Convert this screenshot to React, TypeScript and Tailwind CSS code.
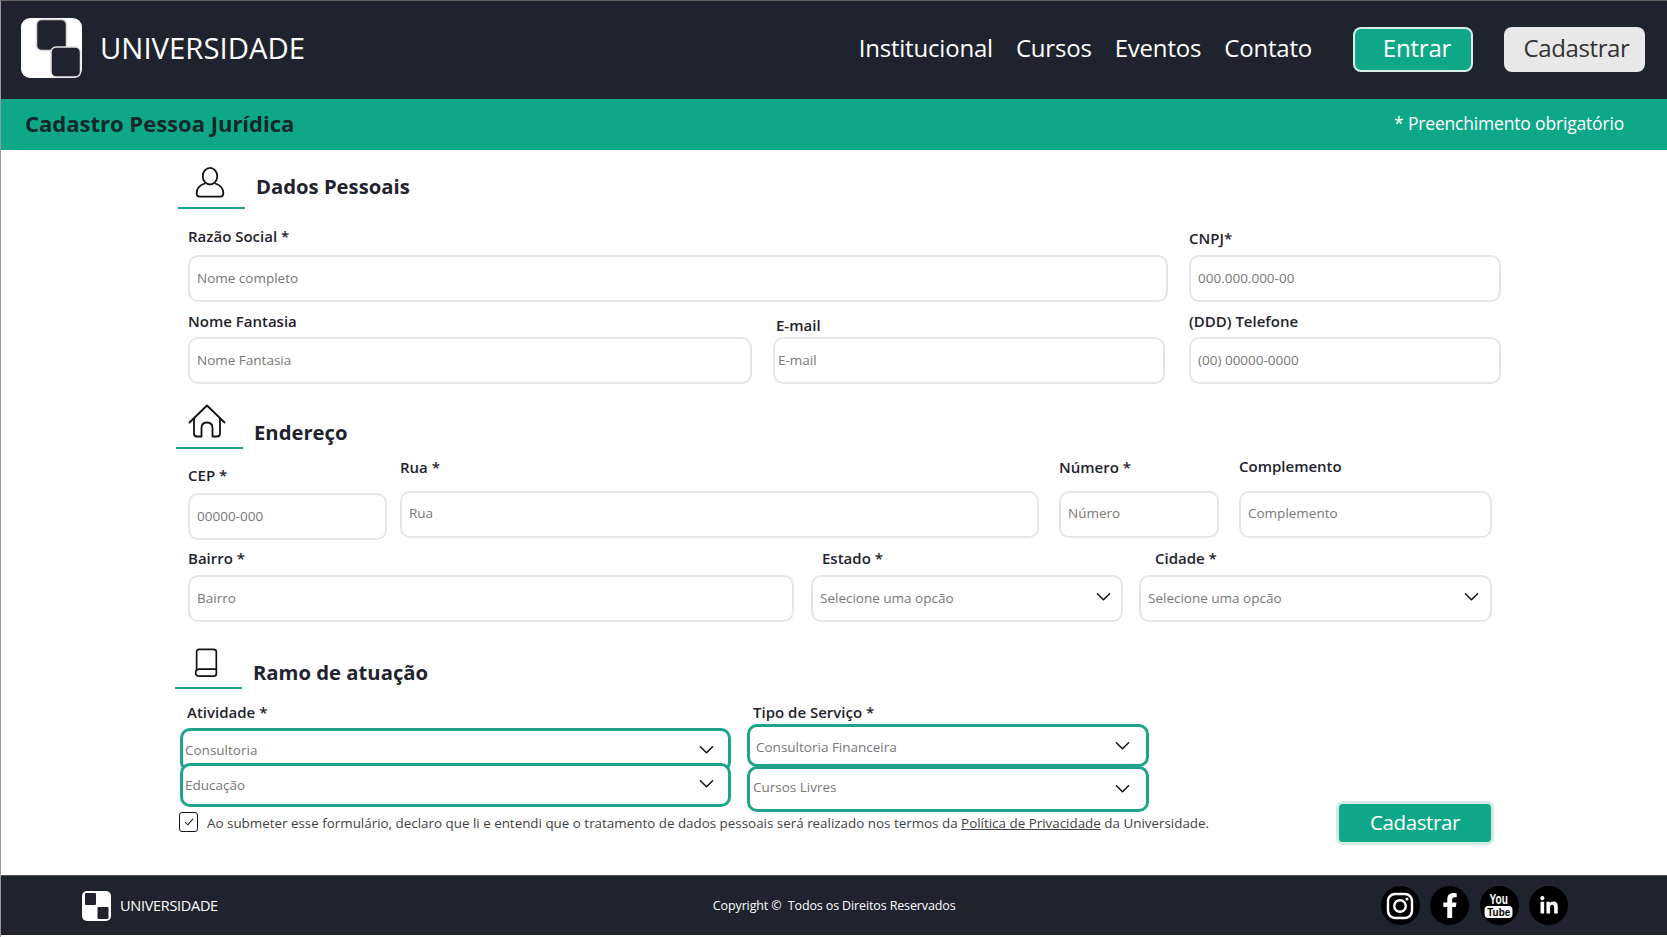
import { FaFacebookF, FaLinkedinIn } from 'react-icons/fa';

const TEAL = 'bg-[#0ea888]';

function Logo({ className }: { className: string }) {
  return (
    <svg viewBox="0 0 61 60" className={className}>
      <rect x="0" y="0" width="61" height="60" rx="9" fill="#ffffff" />
      <rect x="15.5" y="1.5" width="30" height="31" rx="5" fill="#1f232d" stroke="#d9d9d9" strokeWidth="1.5" />
      <rect x="30" y="29" width="29.5" height="30" rx="5" fill="#1f232d" stroke="#e5e5e5" strokeWidth="1.5" />
    </svg>
  );
}

function FooterLogo() {
  return (
    <svg viewBox="0 0 29 30" className="w-[29px] h-[30px]">
      <rect width="29" height="30" rx="5" fill="#ffffff" />
      <rect x="3" y="2" width="11" height="12" rx="1" fill="#1f232d" />
      <rect x="15.5" y="16" width="11" height="12" rx="1" fill="#1f232d" />
    </svg>
  );
}

function Chevron({ className }: { className: string }) {
  return (
    <svg viewBox="0 0 16 10" fill="none" className={`absolute w-[15px] h-[10px] pointer-events-none ${className}`}>
      <path d="M1.5 1.5 L8 8 L14.5 1.5" stroke="#111111" strokeWidth="1.6" strokeLinecap="round" strokeLinejoin="round" />
    </svg>
  );
}

function SectionHead({ title, icon, titleClass }: { title: string; icon: React.ReactNode; titleClass: string }) {
  return (
    <div className="flex">
      <div className="w-[67px] h-[46px] border-b-2 border-[#1fa38b] flex justify-center">{icon}</div>
      <h2 className={`ml-[11px] text-[20.25px] leading-[28px] font-bold text-[#1f232d] ${titleClass}`}>{title}</h2>
    </div>
  );
}

interface FieldProps {
  label: string;
  placeholder: string;
  className: string;
  labelClass?: string;
  inputClass?: string;
}

function Field({ label, placeholder, className, labelClass = 'mb-[6px]', inputClass = 'px-[7px] pb-[2px]' }: FieldProps) {
  return (
    <div className={`flex flex-col ${className}`}>
      <label className={`text-[15px] leading-[20px] font-semibold text-[#1f232d] ${labelClass}`}>{label}</label>
      <input
        placeholder={placeholder}
        className={`w-full h-[47px] border-2 border-[#e6e6e6] rounded-[10px] bg-white text-[13.5px] outline-none placeholder:text-[#777777] ${inputClass}`}
      />
    </div>
  );
}

interface SelectProps {
  value: string;
  wrapClass: string;
  selectClass: string;
  chevronClass: string;
}

function SelectBox({ value, wrapClass, selectClass, chevronClass }: SelectProps) {
  return (
    <div className={`relative ${wrapClass}`}>
      <select
        defaultValue={value}
        className={`w-full h-full appearance-none bg-white rounded-[10px] text-[13.5px] text-[#777777] outline-none ${selectClass}`}
      >
        <option>{value}</option>
      </select>
      <Chevron className={chevronClass} />
    </div>
  );
}

function SocialCircle({ children }: { children: React.ReactNode }) {
  return <div className="relative w-[39px] h-[39px] rounded-full bg-black flex items-center justify-center text-white">{children}</div>;
}

export default function App() {
  return (
    <div className="w-full h-[937px] bg-white flex flex-col font-['Open_Sans',sans-serif] border-t border-[#666666] border-l border-l-[#999999] overflow-hidden">
      {/* Header */}
      <header className="h-[98px] shrink-0 bg-[#1f232d] flex items-center text-white pb-[1px]">
        <div className="ml-[20px] -mt-[3px]"><Logo className="w-[61px] h-[60px]" /></div>
        <span className="ml-[18px] -mt-[2px] text-[29.3px]">UNIVERSIDADE</span>
        <nav className="ml-auto -mt-[4px] flex items-center text-[24px] tracking-[-0.2px]">
          <a>Institucional</a>
          <a className="ml-[23px]">Cursos</a>
          <a className="ml-[23px]">Eventos</a>
          <a className="ml-[23px]">Contato</a>
        </nav>
        <button className={`ml-[41px] w-[120px] h-[45px] rounded-[8px] border-2 border-[#d7eee9] pl-[8px] pb-[4px] ${TEAL} text-[24px] tracking-[-0.2px]`}>Entrar</button>
        <button className="ml-[31px] mr-[22px] w-[141px] h-[45px] rounded-[8px] bg-[#e8e8e8] pl-[4px] pb-[4px] text-[#333333] text-[24px] tracking-[-0.4px]">Cadastrar</button>
      </header>

      {/* Title bar */}
      <div className={`h-[51px] shrink-0 ${TEAL} flex items-center justify-between pl-[24px] pr-[43px] pb-[2px]`}>
        <h1 className="text-[22px] font-bold text-[#12282a]">Cadastro Pessoa Jurídica</h1>
        <span className="text-[17.5px] font-medium text-white tracking-[-0.18px]">* Preenchimento obrigatório</span>
      </div>

      {/* Form */}
      <main className="flex-1 pl-[177px]">
        <div className="mt-[13px]">
          <SectionHead
            title="Dados Pessoais"
            titleClass="mt-[9px]"
            icon={
              <svg viewBox="0 0 30 32" fill="none" stroke="#111111" strokeWidth="1.8" className="w-[30px] h-[31px] mt-[4px] -ml-[4px]">
                <ellipse cx="15" cy="9.5" rx="7.5" ry="8.5" />
                <path d="M9.5 17 C4 19 1.2 23 1.2 27 C1.2 29.5 2.5 30.5 4.5 30.5 L25.5 30.5 C27.5 30.5 28.8 29.5 28.8 27 C28.8 23 26 19 20.5 17" strokeLinecap="round" />
              </svg>
            }
          />
        </div>

        <div className="mt-[17px] ml-[10px] flex items-end">
          <Field label="Razão Social *" placeholder="Nome completo" className="w-[980px]" labelClass="mb-[9px]" />
          <Field label="CNPJ*" placeholder="000.000.000-00" className="ml-[21px] w-[312px]" labelClass="mb-[7px]" />
        </div>

        <div className="mt-[9px] ml-[10px] flex items-end">
          <Field label="Nome Fantasia" placeholder="Nome Fantasia" className="w-[564px]" />
          <Field label="E-mail" placeholder="E-mail" className="ml-[21px] w-[392px]" labelClass="mb-[2px] ml-[3px]" inputClass="px-[3px] pb-[2px]" />
          <Field label="(DDD) Telefone" placeholder="(00) 00000-0000" className="ml-[24px] w-[312px]" />
        </div>

        <div className="mt-[19px] -ml-[2px]">
          <SectionHead
            title="Endereço"
            titleClass="mt-[15px]"
            icon={
              <svg viewBox="0 0 38 34" fill="none" stroke="#111111" strokeWidth="1.8" strokeLinecap="round" strokeLinejoin="round" className="w-[38px] h-[34px] mt-[1px] -ml-[5px]">
                <path d="M1.5 18.5 L19 1.5 L36.5 18.5" />
                <path d="M6 14.5 L6 29.5 C6 31.5 7 32.5 9 32.5 L13.5 32.5 L13.5 24 C13.5 20.5 15.5 18.5 19 18.5 C22.5 18.5 24.5 20.5 24.5 24 L24.5 32.5 L29 32.5 C31 32.5 32 31.5 32 29.5 L32 14.5" />
              </svg>
            }
          />
        </div>

        <div className="mt-[8px] ml-[10px] flex items-start">
          <Field label="CEP *" placeholder="00000-000" className="mt-[8px] w-[199px]" labelClass="mb-[8px]" inputClass="px-[7px] pb-[1px]" />
          <Field label="Rua *" placeholder="Rua" className="ml-[13px] w-[639px]" labelClass="mb-[14px]" inputClass="px-[7px] pb-[3px]" />
          <Field label="Número *" placeholder="Número" className="ml-[20px] w-[160px]" labelClass="mb-[14px]" inputClass="px-[7px] pb-[3px]" />
          <Field label="Complemento" placeholder="Complemento" className="ml-[20px] w-[253px]" labelClass="mb-[14px] -mt-[1px] pb-[1px]" inputClass="px-[7px] pb-[3px]" />
        </div>

        <div className="mt-[8px] ml-[10px] flex items-start">
          <Field label="Bairro *" placeholder="Bairro" className="w-[606px]" labelClass="mb-[7px]" inputClass="px-[7px] pb-[2px]" />
          <div className="ml-[17px] w-[312px]">
            <label className="block ml-[11px] mb-[7px] text-[15px] leading-[20px] font-semibold text-[#1f232d]">Estado *</label>
            <SelectBox
              value="Selecione uma opcão"
              wrapClass="h-[47px]"
              selectClass="border-2 border-[#e6e6e6] pl-[7px]"
              chevronClass="right-[12px] top-[17px]"
            />
          </div>
          <div className="ml-[16px] w-[353px]">
            <label className="block ml-[16px] mb-[7px] text-[15px] leading-[20px] font-semibold text-[#1f232d]">Cidade *</label>
            <SelectBox
              value="Selecione uma opcão"
              wrapClass="h-[47px]"
              selectClass="border-2 border-[#e6e6e6] pl-[7px]"
              chevronClass="right-[13px] top-[17px]"
            />
          </div>
        </div>

        <div className="mt-[21px] -ml-[3px]">
          <SectionHead
            title="Ramo de atuação"
            titleClass="mt-[15px] -ml-[2px]"
            icon={
              <svg viewBox="0 0 26 32" fill="none" stroke="#111111" strokeWidth="1.8" strokeLinejoin="round" strokeLinecap="round" className="w-[26px] h-[30px] mt-[5px] -ml-[5px]">
                <path d="M3 24 L3 4 C3 2.5 4 1.5 5.5 1.5 L21 1.5 C22.5 1.5 24 2.5 24 4 L24 28" />
                <path d="M24 22.5 L6 22.5 C3.5 22.5 2 23.8 2 26 C2 28.2 3.5 30 6 30 L21 30 C22.8 30 24 29.5 24 28" />
              </svg>
            }
          />
        </div>

        <div className="mt-[13px] flex items-start">
          <div className="w-[1160px]">
            <div className="flex items-start">
              <div className="ml-[2px] w-[551px]">
                <label className="block ml-[7px] mb-[6px] text-[15px] leading-[20px] font-semibold text-[#1f232d]">Atividade *</label>
                <SelectBox
                  value="Consultoria"
                  wrapClass="h-[44px]"
                  selectClass="border-[3px] border-[#1fa38b] pl-[2px] pt-[1px]"
                  chevronClass="right-[17px] top-[17px]"
                />
                <SelectBox
                  value="Educação"
                  wrapClass="h-[44px] -mt-[9px]"
                  selectClass="border-[3px] border-[#1fa38b] pl-[2px]"
                  chevronClass="right-[17px] top-[16px]"
                />
              </div>
              <div className="ml-[16px] w-[402px]">
                <label className="block ml-[6px] mb-[2px] text-[15px] leading-[20px] font-semibold text-[#1f232d]">Tipo de Serviço *</label>
                <SelectBox
                  value="Consultoria Financeira"
                  wrapClass="h-[43px]"
                  selectClass="border-[3px] border-[#1fa38b] pl-[6px] pt-[4px]"
                  chevronClass="right-[19px] top-[17px]"
                />
                <SelectBox
                  value="Cursos Livres"
                  wrapClass="h-[46px] -mt-[1px]"
                  selectClass="border-[3px] border-[#1fa38b] pl-[3px] pb-[3px]"
                  chevronClass="right-[19px] top-[18px]"
                />
              </div>
            </div>
            <div className="ml-[1px] flex items-start text-[13.4px] text-[#3f3f3f]">
              <span className="w-[19px] h-[20px] border-[1.5px] border-[#111111] rounded-[3px] flex items-center justify-center">
                <svg viewBox="0 0 12 10" fill="none" className="w-[10px] h-[8px]">
                  <path d="M1 5 L4.5 8.5 L11 1" stroke="#111111" strokeWidth="1.3" />
                </svg>
              </span>
              <span className="ml-[9px] mt-[1px]">
                Ao submeter esse formulário, declaro que li e entendi que o tratamento de dados pessoais será realizado nos termos da{' '}
                <a className="underline">Política de Privacidade</a> da Universidade.
              </span>
            </div>
          </div>
          <button className={`mt-[99px] -ml-[2px] w-[158px] h-[44px] rounded-[7px] border-[3px] border-[#d5e8e3] pb-[2px] ${TEAL} text-white text-[20.5px] tracking-[-0.4px]`}>Cadastrar</button>
        </div>
      </main>

      {/* Footer */}
      <footer className="h-[60px] shrink-0 mb-[2px] bg-[#1f232d] flex items-center text-white border-t border-[#555555]">
        <div className="ml-[81px]"><FooterLogo /></div>
        <span className="ml-[9px] text-[14.5px] tracking-[-0.3px]">UNIVERSIDADE</span>
        <span className="ml-[495px] mt-[2px] text-[12.5px] tracking-[-0.13px] whitespace-pre">Copyright ©  Todos os Direitos Reservados</span>
        <div className="ml-auto mr-[99px] flex items-center gap-[10.5px]">
          <SocialCircle>
            <svg viewBox="0 0 28 28" fill="none" stroke="#ffffff" className="w-[28px] h-[28px]">
              <rect x="2" y="2" width="24" height="24" rx="7" strokeWidth="2.4" />
              <circle cx="14" cy="14" r="5.8" strokeWidth="2.4" />
              <circle cx="21" cy="7" r="1.5" fill="#ffffff" stroke="none" />
            </svg>
          </SocialCircle>
          <SocialCircle><FaFacebookF className="w-[22px] h-[25px]" /></SocialCircle>
          <SocialCircle>
            <div className="flex flex-col items-center font-['Liberation_Sans',sans-serif] font-bold leading-none">
              <span className="text-[14px] scale-x-[0.72] leading-[13px]">You</span>
              <span className="text-[11px] leading-[12px] px-[3px] bg-white text-black rounded-[4px] scale-x-[0.9]">Tube</span>
            </div>
          </SocialCircle>
          <SocialCircle><FaLinkedinIn className="w-[20px] h-[20px]" /></SocialCircle>
        </div>
      </footer>
    </div>
  );
}
